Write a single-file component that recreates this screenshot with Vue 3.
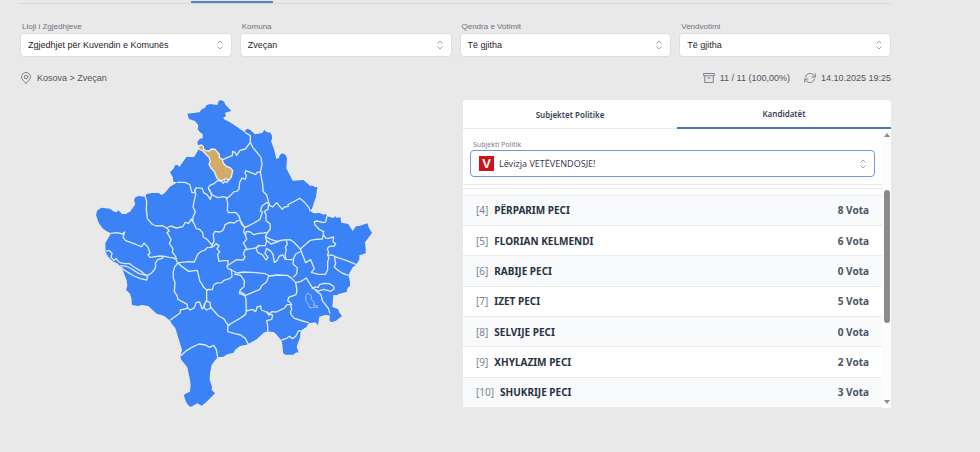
<script setup>
import { ref } from 'vue'

const filters = [
  { id: 'type', label: 'Lloji i Zgjedhjeve', value: 'Zgjedhjet për Kuvendin e Komunës' },
  { id: 'municipality', label: 'Komuna', value: 'Zveçan' },
  { id: 'center', label: 'Qendra e Votimit', value: 'Të gjitha' },
  { id: 'station', label: 'Vendvotimi', value: 'Të gjitha' },
]

const candidates = [
  { no: 4, name: 'PËRPARIM PECI', votes: 8 },
  { no: 5, name: 'FLORIAN KELMENDI', votes: 6 },
  { no: 6, name: 'RABIJE PECI', votes: 0 },
  { no: 7, name: 'IZET PECI', votes: 5 },
  { no: 8, name: 'SELVIJE PECI', votes: 0 },
  { no: 9, name: 'XHYLAZIM PECI', votes: 2 },
  { no: 10, name: 'SHUKRIJE PECI', votes: 3 },
]

const tabs = ['Subjektet Politike', 'Kandidatët']
const activeTab = ref('Kandidatët')

const country =
  'M292 56L328 52L336 42L345 39L349 31L360 27L382 30L386 18L392 15L403 20L405 28L424 48L405 53L408 63L400 68L402 73L420 82L450 102L466 113L466 105L473 101L480 104L495 118L517 114L523 104L529 111L541 113L546 122L546 133L543 138L552 163L559 192L567 189L569 181L577 175L587 180L591 190L589 220L608 257L640 255L651 264L660 272L669 272L673 276L682 276L678 305L667 338L661 349L671 355L690 354L700 359L707 356L711 364L730 369L736 364L741 369L751 366L754 383L775 387L788 408L798 394L808 393L832 385L837 399L846 414L825 442L827 459L827 475L808 481L808 493L798 510L788 517L775 541L780 560L780 573L773 578L770 591L745 597L742 601L730 600L727 636L745 643L747 652L756 663L738 677L724 682L718 676L720 662L708 659L688 665L684 691L676 682L655 685L650 695L632 707L630 727L620 755L626 773L619 772L610 779L585 779L579 773L578 755L575 737L558 717L552 712L532 709L521 713L500 733L470 749L450 753L435 765L430 774L414 777L400 785L383 787L373 799L365 810L360 835L359 855L366 875L365 885L375 895L350 920L335 932L322 925L302 936L295 931L288 920L281 900L291 894L300 890L302 870L300 855L292 817L272 792L272 780L276 765L264 725L256 699L246 688L240 677L226 665L215 660L200 656L175 633L155 630L145 633L126 630L124 610L120 596L108 584L112 572L110 556L98 525L92 515L82 505L70 500L62 493L55 486L47 472L46 445L63 415L50 409L37 399L25 382L22 371L18 360L22 346L34 338L60 341L70 349L80 352L85 346L96 357L107 357L120 350L136 328L132 315L136 307L145 303L165 305L170 297L185 294L206 294L215 300L225 293L240 275L262 262L250 260L248 245L240 232L250 222L256 210L263 210L268 216L290 185L312 187L322 170L326 162L322 140L330 131L338 130L338 117L330 112L323 103L325 91L315 78L297 72Z'

const zvecan =
  'M325 153L334 150L340 155L341 163L347 167L358 168L364 162L375 163L388 178L388 188L397 193L400 205L409 214L420 218L428 227L424 246L417 255L407 251L393 258L381 249L373 230L363 219L357 207L361 199L357 187L345 175L337 167L327 162Z'

const borders = [
  'M398 194L412 188L427 182L428 169L435 172L440 181L450 166L466 162L481 142L481 122L466 113',
  'M481 142L489 158L513 187L516 208L511 232L513 242L518 268L519 289L530 300L537 325L539 332',
  'M512 231L501 232L497 239L481 232L467 227L465 235L469 241L466 253L456 249L449 262L447 283L441 289L432 290L422 301L412 309L401 305L384 308L370 302L362 293L355 280L358 272L372 266L384 256L395 259L400 265L405 258L411 263L416 253',
  'M262 262L284 262L299 268L306 293L313 293L318 278L337 280L341 293L351 299L361 313L365 300L358 282',
  'M165 303L170 319L169 343L172 371L186 387L198 393L217 392L230 399L242 393L259 399L278 395L286 382L296 385L304 372L309 377L309 366L316 350L309 336L313 315L317 299L314 282',
  'M409 308L413 323L412 347L416 353L437 352L447 363L451 376L442 377L433 384L419 382L405 389L403 397L398 407L389 411L375 409L370 417L372 439L367 449L362 446L351 433L340 426L338 413L329 403L319 401L312 385L304 375',
  'M450 375L456 390L466 397L492 384L510 373L517 351L511 348L516 333L529 323L536 326',
  'M539 331L548 336L560 323L568 333L577 343L583 336L595 334L594 329L609 321L629 310L642 320L657 338L661 349',
  'M62 415L80 413L98 417L104 411L99 427L107 437L130 445L142 450L155 455L162 444L174 457L180 475L174 479L180 487L210 483L225 484L237 487L248 488L258 493L263 505',
  'M230 399L238 408L231 413L237 422L243 434L238 446L249 461L247 472L254 480L260 492',
  'M222 484L217 490L203 494L196 505L197 516L192 526L184 534L175 541L166 539L155 530L132 516L119 506L103 506L88 502L78 490L72 497L63 486L66 475L57 466L48 469',
  'M91 512L110 514L120 519L146 535L168 541L173 547L170 555L151 551L132 543L120 536L101 524L92 515',
  'M262 505L253 518L250 530L250 550L255 562L253 590L261 602L264 613L292 628L292 640L271 645L271 653L240 676',
  'M292 638L301 645L313 638L319 622L329 621L336 642L343 632L348 618L360 622L362 639L350 645L342 638L343 625',
  'M263 503L276 515L296 529L322 526L330 559L337 569L341 577L352 586L355 583L367 584L371 570L380 564L395 563L402 556L418 551L426 545L424 524L415 522L410 513L420 507L440 494L460 495L465 485L460 477L465 464L486 461L500 458L506 450',
  'M263 504L275 502L295 500L313 501L323 478L332 470L345 465L351 458L362 457L369 449',
  'M526 425L542 433L560 439L580 435L600 434L611 441L631 462L659 437L671 434L697 432L699 422L701 410L689 404L675 390L673 380L680 378L701 383L707 380L711 363',
  'M362 457L371 454L378 446L387 452L381 461L389 471L383 478L387 499L402 497L414 497L414 511',
  'M423 525L442 534L462 531L499 533L525 536L540 543L562 540L592 541L605 550L617 563L633 559L649 549L665 575L693 599L697 617L715 640L720 656',
  'M665 582L675 576L685 577L688 569L701 565L718 566L731 574L732 584',
  'M432 537L452 541L463 557L462 575L451 584L448 595L465 602L493 590L509 584L515 572L530 560L535 546L540 542',
  'M450 590L464 598L468 613L469 644L467 658L450 670L420 687L414 690L401 671L386 663L369 645L363 637',
  'M421 688L413 695L413 710L434 716L452 720L466 730L475 748',
  'M469 648L487 643L497 650L501 636L512 633L514 645L529 651L538 661L545 650L559 651L575 643L584 639L591 629L605 629L598 620L593 618L596 607L618 599L621 586L617 563',
  'M529 650L548 661L545 673L530 677L533 693L533 708',
  'M602 630L605 642L601 653L605 661L613 670L638 678L656 683',
  'M575 735L590 730L598 724L608 731L618 723L625 708L632 707',
  'M350 620L350 585',
  'M450 375L464 398L461 410L466 420L469 409L481 411L491 419L506 415L521 414L533 412L541 402L540 386L528 377L528 358L523 349L534 343L536 328',
  'M466 418L470 433L460 444L465 452L472 466',
  'M533 412L526 425L530 438L526 452L508 452L498 459L503 472L518 480L528 495L534 487L525 475L530 460L543 469L549 479L553 502L562 496L568 483L578 480L586 493L609 494L617 477L631 470',
  'M529 436L543 447L556 443L566 439',
  'M589 436L592 447L586 457L589 466L585 479L588 494',
  'M611 494L609 507L622 518L620 536L610 547',
  'M631 462L637 478L647 503L662 494L673 521L664 532L685 538L706 538L713 525L713 500L717 488L712 480L716 473L712 461L718 454L733 453L737 446L729 440L731 426L715 430L708 430L701 420',
  'M714 481L726 480L741 487L760 493L778 500L799 509',
  'M733 485L737 505L733 517L743 525L756 534L775 541',
  'M681 583L680 590L701 583L723 589L731 583',
  'M272 783L285 770L304 758L327 747L347 750L358 757L371 751L379 764L383 787',
]

const enclave = 'M647 602L653 594L665 603L663 612L673 622L670 630L683 633L682 638L675 636L660 639L656 629L648 617L647 602'
</script>

<template>
  <main class="page">
    <nav class="topline" aria-label="Rezultatet"><span class="topline-active"></span></nav>

    <section class="filters">
      <div v-for="f in filters" :key="f.id" class="field">
        <label :for="f.id">{{ f.label }}</label>
        <div class="select-box">
          <select :id="f.id"><option>{{ f.value }}</option></select>
          <svg class="chevrons" viewBox="0 0 8 10" aria-hidden="true"><path d="M1.500 3.500L4 1L6.500 3.500M1.500 6.500L4 9L6.500 6.500" /></svg>
        </div>
      </div>
    </section>

    <section class="status">
      <div class="status-item">
        <svg class="icon" viewBox="0 0 24 24" aria-hidden="true">
          <circle cx="12" cy="10" r="3.5" />
          <path d="M12 22.500c5.500-5 9-8.500 9-12.500a9 9 0 0 0-18 0c0 4 3.500 7.500 9 12.500z" />
        </svg>
        <span>Kosova &gt; Zveçan</span>
      </div>
      <div class="status-right">
        <div class="status-item">
          <svg class="icon" viewBox="0 0 24 24" aria-hidden="true">
            <path d="M1.500 3h21v4.500h-21zM3.500 7.500V21h17V7.500M9.500 12h5" />
          </svg>
          <span>11 / 11 (100,00%)</span>
        </div>
        <div class="status-item">
          <svg class="icon" viewBox="0 0 24 24" aria-hidden="true">
            <path d="M22.500 3.500V10H16M1.500 20.500V14H8M3 10a9.200 9.200 0 0 1 15.500-4.500L22.500 10M1.500 14l4 4.500A9.200 9.200 0 0 0 21 14" />
          </svg>
          <span>14.10.2025 19:25</span>
        </div>
      </div>
    </section>

    <section class="content">
      <div class="map">
        <svg viewBox="0 0 870 945" role="img" aria-label="Kosova">
          <path class="country" :d="country" />
          <path v-for="(d, i) in borders" :key="i" class="border" :d="d" />
          <path class="border enclave" :d="enclave" />
          <path class="selected" :d="zvecan" />
        </svg>
      </div>

      <div class="panel">
        <div class="tabs" role="tablist">
          <button
            v-for="t in tabs"
            :key="t"
            type="button"
            role="tab"
            class="tab"
            :class="{ active: t === activeTab }"
            :aria-selected="t === activeTab"
            @click="activeTab = t"
          >{{ t }}</button>
        </div>
        <div class="panel-body">
          <div class="results">
            <div class="party">
              <label for="party">Subjekti Politik</label>
              <div class="select-box party-box">
                <svg class="party-logo" viewBox="0 0 15 15" aria-hidden="true">
                  <rect width="15" height="15" />
                  <text x="7.5" y="12" text-anchor="middle">V</text>
                </svg>
                <select id="party"><option>Lëvizja VETËVENDOSJE!</option></select>
                <svg class="chevrons" viewBox="0 0 8 10" aria-hidden="true"><path d="M1.500 3.500L4 1L6.500 3.500M1.500 6.500L4 9L6.500 6.500" /></svg>
              </div>
            </div>
            <div class="row-edge"></div>
            <table>
              <tbody>
                <tr v-for="c in candidates" :key="c.no">
                  <td><span class="no">[{{ c.no }}]</span><span class="name">{{ c.name }}</span></td>
                  <td class="votes">{{ c.votes }} Vota</td>
                </tr>
              </tbody>
            </table>
          </div>
          <div class="scrollbar" aria-hidden="true">
            <svg viewBox="0 0 6 4"><path d="M0 4L3 0L6 4Z" /></svg>
            <div class="track"><div class="thumb"></div></div>
            <svg viewBox="0 0 6 4"><path d="M0 0L3 4L6 0Z" /></svg>
          </div>
        </div>
      </div>
    </section>
  </main>
</template>

<style>
body {
  margin: 0;
  background: #e9e9e9;
}
</style>

<style scoped>
* {
  box-sizing: border-box;
}
.page {
  padding: 0 89px 40px 20px;
  font-family: "Liberation Sans", Arial, sans-serif;
  font-size: 9px;
  color: #4b5563;
}
.topline {
  display: flex;
  height: 4px;
  padding-left: 171px;
  border-bottom: 1px solid #d6d6d8;
}
.topline-active {
  width: 82px;
  height: 3px;
  border-bottom: 2px solid #4f81cc;
}
.filters {
  display: grid;
  grid-template-columns: repeat(4, 1fr);
  gap: 8px;
  padding-top: 17px;
}
.field label {
  display: block;
  padding-left: 2px;
  font-size: 8px;
  line-height: 12px;
  color: #6b7280;
}
.select-box {
  position: relative;
}
select {
  display: block;
  width: 100%;
  height: 24px;
  padding: 0 20px 0 7px;
  border: 1px solid #dedede;
  border-radius: 4px;
  background: #fff;
  color: #1f2328;
  font-family: inherit;
  font-size: 9px;
  appearance: none;
  outline: none;
}
.chevrons {
  position: absolute;
  top: 50%;
  right: 8px;
  width: 8px;
  height: 10px;
  margin-top: -5px;
  fill: none;
  stroke: #a3a6ab;
  stroke-width: 1;
  pointer-events: none;
}
.status {
  display: flex;
  justify-content: space-between;
  padding-top: 14px;
}
.status-right {
  display: flex;
  gap: 14px;
}
.status-item {
  display: flex;
  align-items: center;
  gap: 5px;
  height: 14px;
}
.icon {
  width: 12px;
  height: 12px;
  fill: none;
  stroke: #7d838e;
  stroke-width: 2;
  stroke-linejoin: round;
  stroke-linecap: round;
}
.content {
  display: grid;
  grid-template-columns: 443fr 428fr;
  padding-top: 15px;
}
.map {
  padding: 0 83px 0 70px;
}
.map svg {
  display: block;
  width: 100%;
  margin-top: -5px;
}
.country {
  fill: #3b82f6;
}
.border {
  fill: none;
  stroke: #dbe9fc;
  stroke-width: 4;
  stroke-linejoin: round;
}
.enclave {
  stroke: #9dc2fa;
  stroke-width: 3;
}
.selected {
  fill: #d3ab69;
  stroke: #f4efe5;
  stroke-width: 4;
}
.panel {
  align-self: start;
  overflow: hidden;
  border-radius: 4px 4px 0 0;
  background: #fff;
  font-family: "Noto Sans", "Open Sans", sans-serif;
}
.tabs {
  display: grid;
  grid-template-columns: 1fr 1fr;
}
.tab {
  height: 29px;
  padding: 0;
  border: 0;
  border-bottom: 1px solid #e6e9ed;
  background: none;
  font-family: inherit;
  font-size: 8px;
  font-weight: 600;
  color: #374151;
}
.tab.active {
  border-bottom: 2px solid #4878bd;
}
.panel-body {
  display: flex;
}
.results {
  flex: 1;
  min-width: 0;
}
.party {
  padding: 10px 7px 7px;
  border-bottom: 1px solid #e8eaed;
}
.party label {
  display: block;
  padding-left: 3px;
  font-size: 7px;
  line-height: 11px;
  color: #7b818b;
}
.party-box select {
  height: 27px;
  padding-left: 28px;
  border-color: #6d9bd2;
  color: #374151;
}
.party-logo {
  position: absolute;
  top: 6px;
  left: 9px;
  width: 15px;
  height: 15px;
}
.party-logo rect {
  fill: #cf1218;
}
.party-logo text {
  fill: #fff;
  font-family: "Liberation Sans", sans-serif;
  font-size: 13px;
  font-weight: 700;
}
.row-edge {
  height: 11px;
  padding-top: 3px;
  border-bottom: 1px solid #e8eaed;
}
.row-edge::before {
  content: "";
  display: block;
  border-top: 1px solid #e8eaed;
}
table {
  width: 100%;
  height: 212px;
  border-collapse: collapse;
  font-size: 10px;
}
td {
  padding: 0 0 0 13px;
  border-bottom: 1px solid #e8eaed;
}
tr:nth-child(odd) {
  background: #f8fafc;
}
.no {
  margin-right: 6px;
  color: #7d838c;
}
.name {
  font-weight: 700;
  color: #283140;
}
.votes {
  padding: 0 13px 0 0;
  text-align: right;
  font-weight: 700;
  color: #4b5563;
}
.scrollbar {
  display: flex;
  flex-direction: column;
  align-items: center;
  width: 9px;
  padding: 4px 0;
  background: #fcfcfc;
}
.scrollbar svg {
  width: 6px;
  height: 4px;
  fill: #8b8b8b;
}
.track {
  flex: 1;
  padding-top: 53px;
}
.thumb {
  width: 6px;
  height: 133px;
  border-radius: 3px;
  background: #8b8b8b;
}
</style>
